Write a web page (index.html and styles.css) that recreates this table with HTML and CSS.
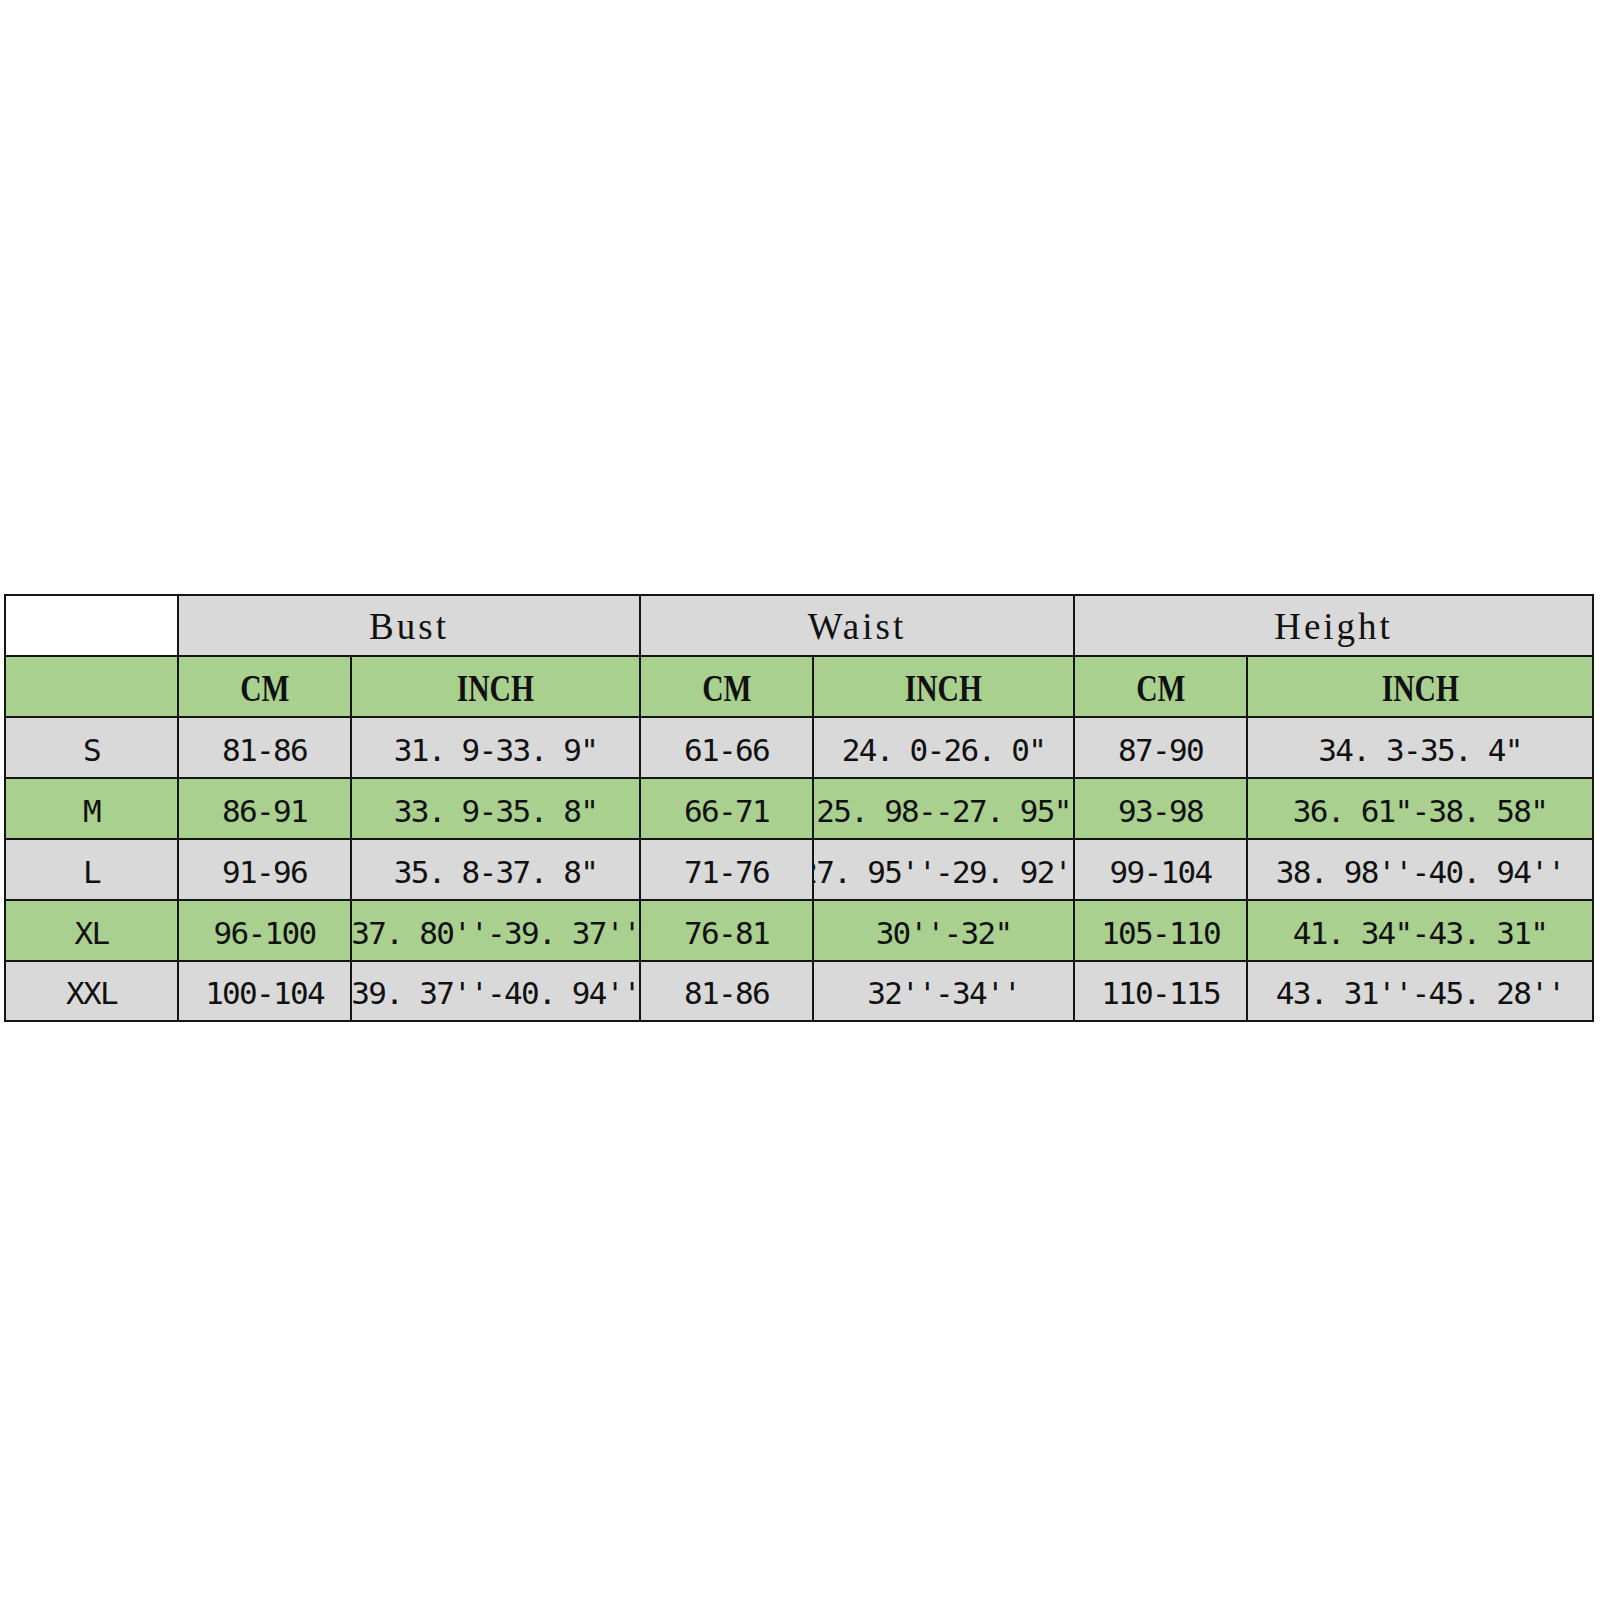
FILE: index.html
```html
<!DOCTYPE html>
<html lang="en">
<head>
<meta charset="utf-8">
<title>Size chart</title>
<link rel="stylesheet" href="styles.css">
</head>
<body>
<div class="page">
<table class="chart">
  <colgroup>
    <col class="c-size">
    <col class="c-cm">
    <col class="c-in1">
    <col class="c-cm">
    <col class="c-in2">
    <col class="c-cm">
    <col class="c-in3">
  </colgroup>
  <tr class="grey">
    <td class="blank"></td>
    <td colspan="2"><div class="v grp">Bust</div></td>
    <td colspan="2"><div class="v grp">Waist</div></td>
    <td colspan="2"><div class="v grp">Height</div></td>
  </tr>
  <tr class="green">
    <td></td>
    <td><div class="v unit"><span>CM</span></div></td>
    <td><div class="v unit"><span>INCH</span></div></td>
    <td><div class="v unit"><span>CM</span></div></td>
    <td><div class="v unit"><span>INCH</span></div></td>
    <td><div class="v unit"><span>CM</span></div></td>
    <td><div class="v unit"><span>INCH</span></div></td>
  </tr>
  <tr class="grey">
    <td><div class="v d">S</div></td>
    <td><div class="v d">81-86</div></td>
    <td><div class="v d">31. 9-33. 9"</div></td>
    <td><div class="v d">61-66</div></td>
    <td><div class="v d">24. 0-26. 0"</div></td>
    <td><div class="v d">87-90</div></td>
    <td><div class="v d">34. 3-35. 4"</div></td>
  </tr>
  <tr class="green">
    <td><div class="v d">M</div></td>
    <td><div class="v d">86-91</div></td>
    <td><div class="v d">33. 9-35. 8"</div></td>
    <td><div class="v d">66-71</div></td>
    <td><div class="v d">25. 98--27. 95"</div></td>
    <td><div class="v d">93-98</div></td>
    <td><div class="v d">36. 61"-38. 58"</div></td>
  </tr>
  <tr class="grey">
    <td><div class="v d">L</div></td>
    <td><div class="v d">91-96</div></td>
    <td><div class="v d">35. 8-37. 8"</div></td>
    <td><div class="v d">71-76</div></td>
    <td><div class="v d">27. 95''-29. 92''</div></td>
    <td><div class="v d">99-104</div></td>
    <td><div class="v d">38. 98''-40. 94''</div></td>
  </tr>
  <tr class="green">
    <td><div class="v d">XL</div></td>
    <td><div class="v d">96-100</div></td>
    <td><div class="v d">37. 80''-39. 37''</div></td>
    <td><div class="v d">76-81</div></td>
    <td><div class="v d">30''-32"</div></td>
    <td><div class="v d">105-110</div></td>
    <td><div class="v d">41. 34"-43. 31"</div></td>
  </tr>
  <tr class="grey short">
    <td><div class="v d">XXL</div></td>
    <td><div class="v d">100-104</div></td>
    <td><div class="v d">39. 37''-40. 94''</div></td>
    <td><div class="v d">81-86</div></td>
    <td><div class="v d">32''-34''</div></td>
    <td><div class="v d">110-115</div></td>
    <td><div class="v d">43. 31''-45. 28''</div></td>
  </tr>
</table>
</div>
</body>
</html>
```

FILE: styles.css
```css
html, body {
  margin: 0;
  background: #ffffff;
}

.page {
  padding: 594px 6px 0 4px;
}

.chart {
  border-collapse: collapse;
  table-layout: fixed;
  width: 1590px;
  color: #111111;
}

.c-size { width: 173px; }
.c-cm { width: 173px; }
.c-in1 { width: 289px; }
.c-in2 { width: 261px; }
.c-in3 { width: 346px; }

.chart td {
  border: 2px solid #151515;
  padding: 0;
  height: 59px;
  text-align: center;
  vertical-align: middle;
}

.chart .short td {
  height: 58px;
}

.grey td { background: #d9d9d9; }
.green td { background: #a9d08e; }
.grey td.blank { background: #ffffff; }

.v {
  display: flex;
  justify-content: center;
  align-items: center;
  height: 59px;
  padding-top: 4px;
  box-sizing: border-box;
  overflow: hidden;
  white-space: nowrap;
}

.short .v {
  height: 58px;
}

.grp {
  font-family: "Liberation Serif", "Times New Roman", serif;
  font-size: 37px;
  letter-spacing: 3px;
  padding-top: 2px;
}

.unit {
  font-family: "Liberation Serif", "Times New Roman", serif;
  font-size: 37px;
  font-weight: bold;
}

.unit span {
  display: inline-block;
  transform: scaleX(0.8);
}

.d {
  font-family: "DejaVu Sans Mono", "Liberation Mono", monospace;
  font-size: 31px;
  letter-spacing: -1.7px;
}
```
